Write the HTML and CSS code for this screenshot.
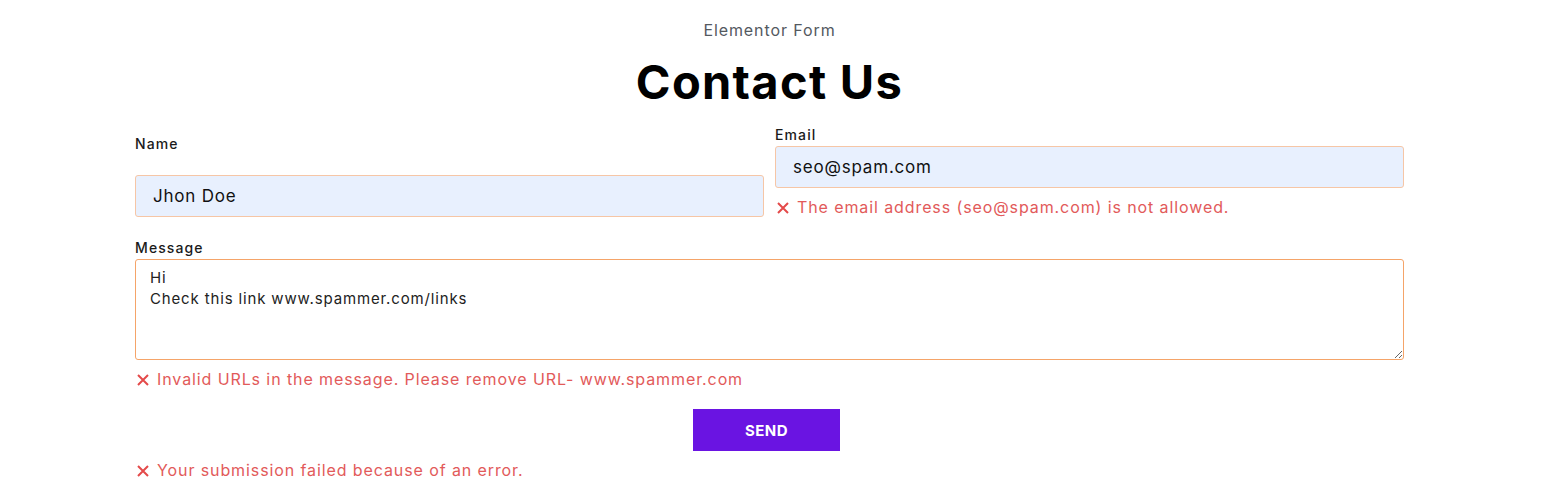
FILE: index.html
```html
<!DOCTYPE html>
<html lang="en">
<head>
    <meta charset="UTF-8">
    <meta name="viewport" content="width=device-width, initial-scale=1.0">
    <title>Contact Us</title>
    <link rel="stylesheet" href="styles.css">
</head>
<body>
    <div class="wrapper">
        <p class="subtitle">Elementor Form</p>
        <h1 class="title">Contact Us</h1>
        <form class="form" onsubmit="return false">
            <div class="row">
                <div class="field field-name">
                    <label class="label" for="name">Name</label>
                    <input class="input" id="name" type="text" value="Jhon Doe">
                </div>
                <div class="field">
                    <label class="label" for="email">Email</label>
                    <input class="input" id="email" type="email" value="seo@spam.com">
                    <div class="error"><svg class="error-icon" viewBox="0 0 14 14"><path d="M2 2L12 12M12 2L2 12"/></svg>The email address (seo@spam.com) is not allowed.</div>
                </div>
            </div>
            <div class="field field-message">
                <label class="label" for="message">Message</label>
                <textarea class="textarea" id="message" rows="4">Hi
Check this link www.spammer.com/links</textarea>
                <div class="error"><svg class="error-icon" viewBox="0 0 14 14"><path d="M2 2L12 12M12 2L2 12"/></svg>Invalid URLs in the message. Please remove URL- www.spammer.com</div>
            </div>
            <div class="actions">
                <button class="button" type="submit">SEND</button>
            </div>
            <div class="error form-error"><svg class="error-icon" viewBox="0 0 14 14"><path d="M2 2L12 12M12 2L2 12"/></svg>Your submission failed because of an error.</div>
        </form>
    </div>
</body>
</html>
```

FILE: styles.css
```css
body {
    margin: 0;
    background-color: #fff;
    font-family: Inter, "Open Sans", sans-serif;
    color: #1f1f1f;
}
.wrapper {
    width: 1269px;
    margin-left: 135px;
}
.subtitle {
    margin: 19px 0 0;
    text-align: center;
    font-size: 16px;
    line-height: 22px;
    letter-spacing: 0.9px;
    color: #54595f;
}
.title {
    margin: 11px 0 13px;
    text-align: center;
    font-size: 47px;
    line-height: 60px;
    font-weight: 700;
    letter-spacing: 1.3px;
    color: #000;
}
.row {
    display: flex;
    align-items: flex-end;
    gap: 11px;
}
.field {
    flex: 1;
    display: flex;
    flex-direction: column;
}
.field-name .label {
    margin-bottom: 21px;
}
.label {
    font-size: 14px;
    line-height: 20px;
    font-weight: 500;
    letter-spacing: 1.1px;
    color: #1a1a1a;
    margin-bottom: 1px;
}
.input {
    box-sizing: border-box;
    height: 42px;
    padding: 0 17px;
    border: 1px solid #f6c6a6;
    border-radius: 3px;
    background-color: #e8f0fe;
    font-family: inherit;
    font-size: 17px;
    letter-spacing: 0.8px;
    color: #111;
    outline: none;
}
.field-message {
    margin-top: 21px;
}
.textarea,
.textarea:hover,
.textarea:focus {
    box-sizing: border-box;
    height: 101px;
    padding: 7px 14px;
    border: 1px solid #f5a469;
    border-radius: 3px;
    background-color: #fff;
    font-family: inherit;
    font-size: 15px;
    line-height: 21px;
    letter-spacing: 0.85px;
    color: #222;
    outline: none;
}
.error {
    display: flex;
    align-items: center;
    margin-top: 9px;
    font-size: 16px;
    line-height: 20px;
    letter-spacing: 0.9px;
    color: #e25a5a;
}
.error-icon {
    flex: none;
    width: 14px;
    height: 14px;
    margin: 1px 7px 0 1px;
    fill: none;
    stroke: #e44a4a;
    stroke-width: 2;
}
.actions {
    display: flex;
    justify-content: center;
    margin-top: 20px;
    padding-right: 6px;
}
.button {
    width: 147px;
    height: 42px;
    border: none;
    background-color: #6a14e2;
    color: #fff;
    font-family: inherit;
    font-size: 15px;
    font-weight: 700;
    letter-spacing: 0.5px;
    cursor: pointer;
}
.form-error {
    margin-top: 9px;
}
```
